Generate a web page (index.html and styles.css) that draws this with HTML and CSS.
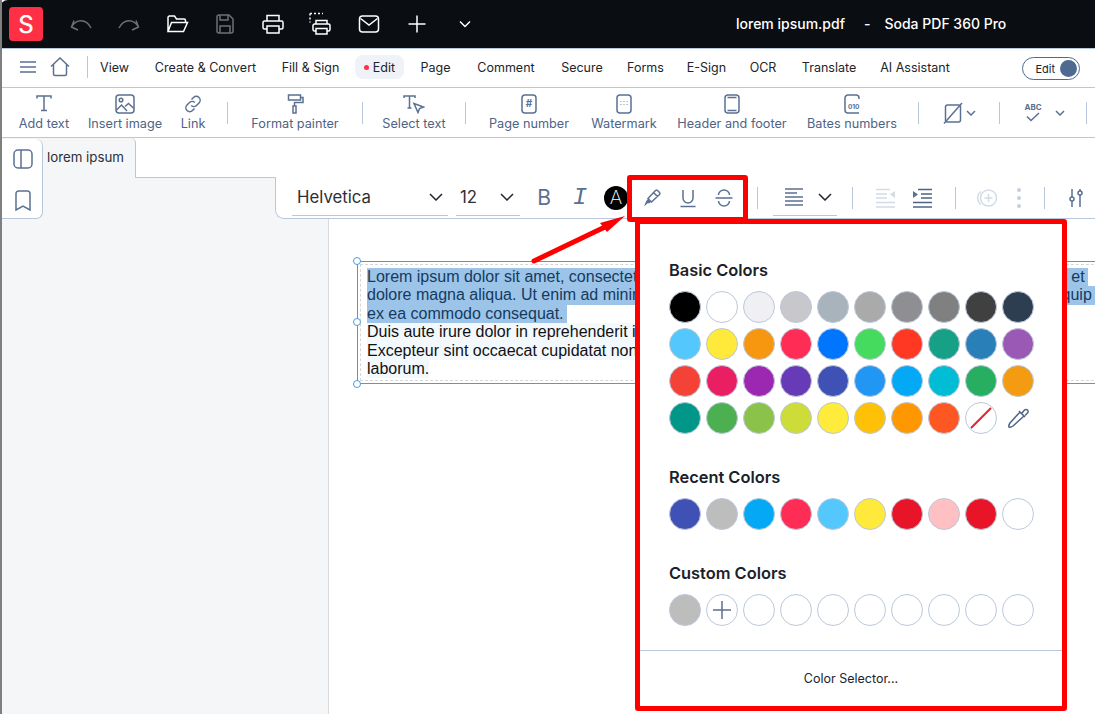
FILE: index.html
```html
<!DOCTYPE html>
<html lang="en">
<head>
  <meta charset="UTF-8">
  <title>lorem ipsum.pdf - Soda PDF 360 Pro</title>
  <link rel="stylesheet" href="styles.css">
</head>
<body>
<div class="app">

  <!-- title bar -->
  <header class="titlebar">
    <div class="logo">S</div>
    <div class="quick">
      <span class="quick__btn quick__btn--off"><svg width="22" height="22" viewBox="0 0 22 22"><path d="M4 7.500L1.500 14l6.500 3M1.500 14C6 6 16 5 21 15"/></svg></span>
      <span class="quick__btn quick__btn--off"><svg width="22" height="22" viewBox="0 0 22 22"><path d="M18 7.500L20.500 14 14 17M20.500 14C16 6 6 5 1 15"/></svg></span>
      <span class="quick__btn"><svg width="24" height="22" viewBox="0 0 24 22"><path d="M3 18V4.500A1.500 1.500 0 0 1 4.500 3h5l2 3H19a1.500 1.500 0 0 1 1.500 1.500V9M3 18.500h15.500L22.500 9.500H6.500L3 18.500z"/></svg></span>
      <span class="quick__btn quick__btn--off"><svg width="22" height="22" viewBox="0 0 22 22"><path d="M3 4a2 2 0 0 1 2-2h10l4 4v12a2 2 0 0 1-2 2H5a2 2 0 0 1-2-2zM6 2v5h8V2M6 20v-7h10v7"/></svg></span>
      <span class="quick__btn"><svg width="22" height="22" viewBox="0 0 22 22"><path d="M5 8V2.500h12V8M5 16H2.500A1.500 1.500 0 0 1 1 14.500V9.500A1.500 1.500 0 0 1 2.500 8h17A1.500 1.500 0 0 1 21 9.500v5a1.500 1.500 0 0 1-1.500 1.500H17M5 13h12v7H5z"/></svg></span>
      <span class="quick__btn"><svg width="24" height="24" viewBox="0 0 24 24"><path d="M7 12V8.500h11V12M7 19H5.500A1.500 1.500 0 0 1 4 17.500v-4A1.500 1.500 0 0 1 5.500 12h14a1.500 1.500 0 0 1 1.500 1.500v4a1.500 1.500 0 0 1-1.500 1.500H18M7 16.500h11v5.500H7z"/><path d="M1 1.500h13M1 1.500v9" stroke-dasharray="2 2"/></svg></span>
      <span class="quick__btn"><svg width="22" height="20" viewBox="0 0 22 20"><rect x="1.500" y="2" width="19" height="16" rx="3"/><path d="M2.500 4.500L11 11l8.500-6.500"/></svg></span>
      <span class="quick__btn"><svg width="20" height="20" viewBox="0 0 20 20"><path d="M10 1.500v17M1.500 10h17"/></svg></span>
      <span class="quick__btn"><svg width="14" height="10" viewBox="0 0 14 10"><path d="M2 2.500l5 5 5-5"/></svg></span>
    </div>
    <div class="titlebar__name">lorem ipsum.pdf<span class="titlebar__dash">-</span>Soda PDF 360 Pro</div>
  </header>

  <!-- menu -->
  <nav class="menu">
    <svg class="menu__burger" width="16" height="12" viewBox="0 0 16 12"><path d="M0 1h16M0 6h16M0 11h16"/></svg>
    <svg class="menu__home" width="20" height="20" viewBox="0 0 20 20"><path d="M1 9.500L10 1l9 8.500M3.500 7.500V17a1.500 1.500 0 0 0 1.500 1.500h10a1.500 1.500 0 0 0 1.500-1.500V7.500"/></svg>
    <span class="menu__sep"></span>
    <div class="menu__items">
      <a>View</a>
      <a>Create &amp; Convert</a>
      <a>Fill &amp; Sign</a>
      <a class="menu__active"><i class="dot"></i>Edit</a>
      <a>Page</a>
      <a>Comment</a>
      <a>Secure</a>
      <a>Forms</a>
      <a>E-Sign</a>
      <a>OCR</a>
      <a>Translate</a>
      <a>AI Assistant</a>
    </div>
    <div class="switch">Edit<i class="switch__knob"></i></div>
  </nav>

  <!-- tools -->
  <section class="toolbar">
    <div class="tool tool--add">
      <svg width="20" height="20" viewBox="0 0 20 20"><path d="M3 4.500V2h14v2.500M10 2v14.500M7 16.500h6"/></svg>
      <span>Add text</span>
    </div>
    <div class="tool tool--image">
      <svg width="20" height="20" viewBox="0 0 20 20"><rect x="1" y="1" width="18" height="18" rx="3"/><circle cx="6" cy="6" r="1.800"/><path d="M1.500 16l5-5 5.500 6M10 12.500l3.500-3 5.500 5"/></svg>
      <span>Insert image</span>
    </div>
    <div class="tool tool--link">
      <svg width="20" height="20" viewBox="0 0 20 20"><path d="M8.500 5.500l2-2a3.800 3.800 0 0 1 5.500 5.500l-2.500 2.500a3.800 3.800 0 0 1-5.300 0M11.500 14.500l-2 2A3.800 3.800 0 0 1 4 11l2.500-2.500a3.800 3.800 0 0 1 5.300 0"/></svg>
      <span>Link</span>
    </div>
    <i class="tool-sep"></i>
    <div class="tool tool--painter">
      <svg width="18" height="20" viewBox="0 0 18 20"><path d="M2.500 1h12v5h-12zM14.500 3.500H17v5H8.500v3M7 12h3v7H7z"/></svg>
      <span>Format painter</span>
    </div>
    <i class="tool-sep"></i>
    <div class="tool tool--select">
      <svg width="22" height="20" viewBox="0 0 22 20"><path d="M1 4V2h11v2M6.500 2v12M4.500 14h4M11 9.500l9.500 3.500-4 1.500-1.500 4z"/></svg>
      <span>Select text</span>
    </div>
    <i class="tool-sep"></i>
    <div class="tool tool--page">
      <svg width="16" height="20" viewBox="0 0 16 20"><rect x="1" y="1" width="14" height="18" rx="3"/><text x="8" y="13" class="svg-txt" text-anchor="middle">#</text></svg>
      <span>Page number</span>
    </div>
    <div class="tool tool--mark">
      <svg width="16" height="20" viewBox="0 0 16 20"><rect x="1" y="1" width="14" height="18" rx="3"/><path class="dots" d="M4.500 7.500h.8M7.600 7.500h.8M10.700 7.500h.8M4.500 10.500h.8M7.600 10.500h.8M10.700 10.500h.8"/></svg>
      <span>Watermark</span>
    </div>
    <div class="tool tool--header">
      <svg width="16" height="20" viewBox="0 0 16 20"><rect x="1" y="1" width="14" height="18" rx="3"/><path d="M3.500 3.500h9M3.500 16.500h9"/></svg>
      <span>Header and footer</span>
    </div>
    <div class="tool tool--bates">
      <svg width="16" height="20" viewBox="0 0 16 20"><path d="M15 5V4a3 3 0 0 0-3-3H4a3 3 0 0 0-3 3v12a3 3 0 0 0 3 3h11"/><text x="15.500" y="15" class="svg-txt svg-txt--small" text-anchor="end">010</text></svg>
      <span>Bates numbers</span>
    </div>
    <i class="tool-sep tool-sep--near"></i>
    <div class="tool-drop tool-drop--shape">
      <svg width="20" height="22" viewBox="0 0 20 22"><rect x="2.500" y="3" width="15" height="17" rx="2"/><path d="M1 21.500L19 1"/></svg>
      <svg class="chev" width="10" height="6" viewBox="0 0 10 6"><path d="M1 1l4 4 4-4"/></svg>
    </div>
    <i class="tool-sep"></i>
    <div class="tool-drop tool-drop--abc">
      <svg width="22" height="22" viewBox="0 0 22 22"><text x="11" y="8" class="svg-txt svg-txt--abc" text-anchor="middle">ABC</text><path d="M5 14.500l4 4 8-7.500"/></svg>
      <svg class="chev chev--abc" width="10" height="6" viewBox="0 0 10 6"><path d="M1 1l4 4 4-4"/></svg>
    </div>
    <i class="tool-sep"></i>
  </section>

  <!-- tabs -->
  <div class="tabs">
    <div class="tab">lorem ipsum</div>
  </div>

  <div class="work">
    <aside class="side"></aside>
    <main class="doc">
      <div class="textbox">
        <i class="handle handle--top"></i>
        <i class="handle handle--mid"></i>
        <i class="handle handle--bot"></i>
        <div class="textbox__inner">
          <span class="line line--sel">Lorem ipsum dolor sit amet, consectetur adipiscing elit, sed do eiusmod tempor incididunt ut labore et</span>
          <span class="line line--sel">dolore magna aliqua. Ut enim ad minim veniam, quis nostrud exercitation ullamco laboris nisi ut aliquip</span>
          <span class="line line--sel">ex ea commodo consequat.</span>
          <span class="line">Duis aute irure dolor in reprehenderit in voluptate velit esse cillum dolore eu fugiat nulla pariatur.</span>
          <span class="line">Excepteur sint occaecat cupidatat non proident, sunt in culpa qui officia deserunt mollit anim id est</span>
          <span class="line">laborum.</span>
        </div>
      </div>
    </main>
  </div>

  <!-- left rail, floats over tab row -->
  <div class="rail">
    <svg width="20" height="20" viewBox="0 0 20 20"><rect x="1" y="1" width="18" height="18" rx="4"/><path d="M8 1v18"/></svg>
    <svg width="16" height="21" viewBox="0 0 16 21"><path d="M1 3.500A2.500 2.500 0 0 1 3.500 1h9A2.500 2.500 0 0 1 15 3.500V20l-7-4-7 4z"/></svg>
  </div>

  <!-- text format bar -->
  <div class="fmt">
    <div class="fmt__select fmt__select--font">Helvetica<svg width="14" height="8" viewBox="0 0 14 8"><path d="M1 1l6 6 6-6"/></svg></div>
    <div class="fmt__select fmt__select--size">12<svg width="14" height="8" viewBox="0 0 14 8"><path d="M1 1l6 6 6-6"/></svg></div>
    <span class="fmt__btn fmt__letter fmt__btn--first">B</span>
    <span class="fmt__btn fmt__letter fmt__letter--i">I</span>
    <span class="fmt__btn"><b class="fmt__color">A</b></span>
    <span class="fmt__btn"><svg width="20" height="20" viewBox="0 0 20 20"><path d="M6 10.500L13.500 2.500a1.500 1.500 0 0 1 2 0l2 2a1.500 1.500 0 0 1 0 2L9.500 14zM11.500 4.500l4 4"/><path class="solid" d="M6 11l3 3-2 1.500-1-.5-4 3.500L4 13.500 5 12z"/></svg></span>
    <span class="fmt__btn"><svg width="18" height="20" viewBox="0 0 18 20"><path d="M4 2v8a5 5 0 0 0 10 0V2M1.500 18.500h15"/></svg></span>
    <span class="fmt__btn"><svg width="18" height="20" viewBox="0 0 18 20"><path d="M3.500 7a5.500 5 0 0 1 11 0M3.500 13a5.500 5 0 0 0 11 0M.5 10h17"/></svg></span>
    <i class="fmt__sep"></i>
    <div class="fmt__select fmt__select--align">
      <svg class="align-ic" width="18" height="18" viewBox="0 0 18 18"><path d="M0 1h18M0 5h12M0 9h18M0 13h18M0 17h18"/></svg>
      <svg width="14" height="8" viewBox="0 0 14 8"><path d="M1 1l6 6 6-6"/></svg>
    </div>
    <i class="fmt__sep"></i>
    <span class="fmt__btn fmt__btn--dim"><svg width="20" height="20" viewBox="0 0 20 20"><path d="M0 1.500h14M0 6h11M0 10h11M0 14.500h19M0 19h19"/><path class="solid" d="M19 3v7l-5-3.500z"/></svg></span>
    <span class="fmt__btn fmt__btn--indent"><svg width="20" height="20" viewBox="0 0 20 20"><path d="M6 1.500h14M9 6h11M9 10h11M1 14.500h19M1 19h19"/><path class="solid" d="M1 3v7l5-3.500z"/></svg></span>
    <i class="fmt__sep"></i>
    <span class="fmt__btn fmt__btn--dim fmt__btn--plus"><svg width="22" height="18" viewBox="0 0 22 18"><circle cx="12.500" cy="9" r="8"/><path d="M8.500 9h8M12.500 5v8M5 2.500a8 8 0 0 0 0 13"/></svg></span>
    <span class="fmt__btn fmt__btn--dim fmt__btn--dots"><i></i><i></i><i></i></span>
    <i class="fmt__sep"></i>
    <span class="fmt__btn fmt__btn--sliders"><svg width="14" height="18" viewBox="0 0 14 18"><path d="M3 0v8M3 12v6M11 0v2M11 6v12"/><circle cx="3" cy="10" r="2"/><circle cx="11" cy="4" r="2"/></svg></span>
  </div>

  <!-- colour popup -->
  <div class="picker">
    <div class="picker__body">
      <h4>Basic Colors</h4>
      <div class="swatches">
        <i class="sw c-000"></i><i class="sw c-fff"></i><i class="sw c-eef"></i><i class="sw c-c8c"></i><i class="sw c-a9b"></i><i class="sw c-aaa"></i><i class="sw c-8e8"></i><i class="sw c-808"></i><i class="sw c-404"></i><i class="sw c-2c3"></i>
        <i class="sw c-54c"></i><i class="sw c-ffe"></i><i class="sw c-f79"></i><i class="sw c-f25"></i><i class="sw c-07f"></i><i class="sw c-4d6"></i><i class="sw c-f38"></i><i class="sw c-16a"></i><i class="sw c-298"></i><i class="sw c-9b5"></i>
        <i class="sw c-f44"></i><i class="sw c-e91"></i><i class="sw c-9c2"></i><i class="sw c-673"></i><i class="sw c-3f5"></i><i class="sw c-219"></i><i class="sw c-03a"></i><i class="sw c-00b"></i><i class="sw c-27a"></i><i class="sw c-f39"></i>
        <i class="sw c-009"></i><i class="sw c-4ca"></i><i class="sw c-8bc"></i><i class="sw c-cdd"></i><i class="sw c-feb"></i><i class="sw c-fc0"></i><i class="sw c-f90"></i><i class="sw c-f57"></i>
        <i class="sw sw--none"><svg width="30" height="30" viewBox="0 0 30 30"><path d="M5 25L25 5"/></svg></i>
        <i class="sw--drop"><svg width="22" height="22" viewBox="0 0 22 22"><path d="M13 5L3 16c-1 1.500-1.500 3-1 4 1 .5 2.500 0 4-1L17 9M12 4l6 6M15 6l2.500-3a2 2 0 0 1 3 3L18 8.500"/></svg></i>
      </div>
      <h4>Recent Colors</h4>
      <div class="swatches">
        <i class="sw c-3f5"></i><i class="sw c-bbb"></i><i class="sw c-03a"></i><i class="sw c-f25"></i><i class="sw c-54c"></i><i class="sw c-ffe"></i><i class="sw c-e81"></i><i class="sw c-fbc"></i><i class="sw c-e81"></i><i class="sw c-fff"></i>
      </div>
      <h4>Custom Colors</h4>
      <div class="swatches">
        <i class="sw c-bbb"></i>
        <i class="sw c-fff sw--add"><svg width="18" height="18" viewBox="0 0 18 18"><path d="M9 0v18M0 9h18"/></svg></i>
        <i class="sw c-fff"></i><i class="sw c-fff"></i><i class="sw c-fff"></i><i class="sw c-fff"></i><i class="sw c-fff"></i><i class="sw c-fff"></i><i class="sw c-fff"></i><i class="sw c-fff"></i>
      </div>
    </div>
    <div class="picker__foot">Color Selector...</div>
  </div>

  <!-- red callouts -->
  <div class="callout"></div>
  <svg class="arrow" width="100" height="54" viewBox="0 0 100 54">
    <path class="arrow__line" d="M3 48L76 13"/>
    <path class="arrow__head" d="M94 3L69 10 76 19z"/>
  </svg>
</div>
</body>
</html>
```

FILE: styles.css
```css
* {
  box-sizing: border-box;
  font-family: Inter, "Noto Sans", sans-serif;
}
html, body {
  margin: 0;
  height: 100%;
  overflow: hidden;
  background: #fff;
}
svg {
  fill: none;
  stroke: #5b7092;
  stroke-width: 1.5;
  display: block;
  flex: none;
}
svg .solid {
  fill: #5b7092;
  stroke: none;
}
.app {
  position: relative;
  width: 1095px;
  height: 714px;
  overflow: hidden;
  border-left: 2px solid #7f7f7f;
  display: flex;
  flex-direction: column;
}

/* title bar */
.titlebar {
  height: 49px;
  margin-left: -2px;
  flex: none;
  background: #0a0d12;
  border-top-left-radius: 8px;
  display: flex;
  align-items: center;
  padding-left: 9px;
  border-bottom: 1px solid #b9c7dc;
}
.logo {
  width: 34px;
  height: 34px;
  border-radius: 4px;
  background: #ff3045;
  color: #fff;
  font-size: 24px;
  font-weight: 500;
  display: flex;
  align-items: center;
  justify-content: center;
}
.quick {
  display: flex;
  margin-left: 14px;
}
.quick__btn {
  width: 48px;
  height: 34px;
  display: flex;
  align-items: center;
  justify-content: center;
}
.quick__btn svg {
  stroke: #fff;
}
.quick__btn--off svg {
  stroke: #6d7074;
}
.titlebar__name {
  position: absolute;
  left: 734px;
  top: 15px;
  color: #fff;
  font-size: 14px;
  font-weight: 500;
  line-height: 18px;
  white-space: nowrap;
}
.titlebar__dash {
  margin: 0 14px 0 19px;
}

/* menu */
.menu {
  height: 39px;
  flex: none;
  display: flex;
  align-items: center;
  border-bottom: 1px solid #b9c7dc;
  padding: 0 0 2px 18px;
}
.menu__home {
  margin-left: 14px;
}
.menu__sep {
  width: 1px;
  height: 22px;
  background: #b9c7dc;
  margin-left: 17px;
}
.menu__items {
  display: grid;
  grid-template-columns: 29px 105px 57px 33px 31px 62px 42px 37px 37px 28px 56px 68px;
  column-gap: 24px;
  justify-items: center;
  align-items: center;
  margin-left: 12px;
  font-size: 12.500px;
  color: #20252d;
  white-space: nowrap;
}
.menu__active {
  background: #eff2f7;
  border-radius: 8px;
  width: 49px;
  height: 24px;
  display: flex;
  align-items: center;
  justify-content: center;
  gap: 4px;
}
.dot {
  width: 5px;
  height: 5px;
  border-radius: 50%;
  background: #ff3045;
}
.switch {
  position: absolute;
  left: 1020px;
  top: 57px;
  width: 58px;
  height: 23px;
  border: 1px solid #4e6a90;
  border-radius: 12px;
  font-size: 11px;
  color: #20252d;
  display: flex;
  align-items: center;
  justify-content: flex-end;
  gap: 5px;
  padding-right: 2px;
}
.switch__knob {
  width: 17px;
  height: 17px;
  border-radius: 50%;
  background: #4e6a90;
}

/* tools */
.toolbar {
  height: 50px;
  flex: none;
  display: flex;
  align-items: center;
  padding-left: 8px;
  border-bottom: 1px solid #b9c7dc;
}
.tool {
  flex: none;
  display: flex;
  flex-direction: column;
  align-items: center;
  gap: 2px;
  font-size: 12.700px;
  color: #4e6485;
  white-space: nowrap;
}
.tool span {
  line-height: 16px;
}
.tool--add { width: 68px; }
.tool--image { width: 94px; }
.tool--link { width: 42px; }
.tool--painter { width: 108px; }
.tool--select { width: 76px; }
.tool--page { width: 100px; }
.tool--mark { width: 90px; }
.tool--header { width: 126px; }
.tool--bates { width: 114px; }
.tool-sep {
  flex: none;
  width: 1px;
  height: 22px;
  margin: 0 13px;
  background: #b9c7dc;
}
.tool-sep--near {
  margin-left: 9px;
}
.tool-drop {
  flex: none;
  display: flex;
  align-items: center;
  justify-content: center;
  gap: 3px;
}
.tool-drop--shape { width: 54px; }
.tool-drop--abc { width: 60px; gap: 5px; }
.chev--abc {
  margin-left: 6px;
}
.svg-txt {
  fill: #5b7092;
  stroke: none;
  font-size: 10px;
  font-weight: 700;
}
.svg-txt--small {
  font-size: 6.500px;
}
.svg-txt--abc {
  font-size: 8px;
}
.dots {
  stroke-width: 1.200px;
}

/* tabs */
.tabs {
  height: 40px;
  flex: none;
  display: flex;
  border-bottom: 1px solid #b9c7dc;
}
.tab {
  width: 134px;
  height: 40px;
  background: #f5f6f8;
  border-right: 1px solid #b9c7dc;
  border-radius: 0 5px 0 0;
  font-size: 13.300px;
  color: #2b3036;
  padding: 10px 0 0 45px;
  line-height: 18px;
}

/* work area */
.work {
  flex: 1;
  display: flex;
  min-height: 0;
}
.side {
  width: 326px;
  flex: none;
  background: #f5f6f8;
}
.doc {
  flex: 1;
  min-width: 0;
  background: #fff;
  border-left: 1px solid #d9d9d9;
  padding: 83px 0 0 28px;
}
.textbox {
  position: relative;
  width: 900px;
  height: 123px;
  border: 1px solid #4a9ce0;
  padding: 2px;
}
.textbox__inner {
  height: 100%;
  border: 1px dashed #d6d6d6;
  padding: 3px 6px;
}
.line {
  display: block;
  width: fit-content;
  white-space: nowrap;
  font-family: "Liberation Sans", Arial, sans-serif;
  font-size: 16px;
  line-height: 18.400px;
  color: #111;
  background: #f3f8fd;
}
.line--sel {
  background: #9cc4e8;
  color: #153a60;
  padding-right: 3px;
}
.handle {
  position: absolute;
  left: -5px;
  width: 8px;
  height: 8px;
  border: 1px solid #4a9ce0;
  border-radius: 50%;
  background: #fff;
}
.handle--top { top: -5px; }
.handle--mid { top: 56px; }
.handle--bot { bottom: -5px; }

/* floating rail */
.rail {
  position: absolute;
  left: 0;
  top: 139px;
  width: 41px;
  height: 80px;
  background: #fff;
  border: 1px solid #b9c7dc;
  border-width: 0 1px 1px 0;
  border-radius: 0 7px 7px 0;
  display: flex;
  flex-direction: column;
  align-items: center;
  gap: 21px;
  padding: 10px 0 0 1px;
}

/* format bar */
.fmt {
  position: absolute;
  left: 273px;
  top: 177px;
  width: 822px;
  height: 42px;
  background: #fff;
  border: 1px solid #b9c7dc;
  border-width: 0 0 1px 1px;
  border-radius: 0 0 0 9px;
  display: flex;
  align-items: center;
  padding-left: 16px;
}
.fmt__select {
  height: 37px;
  display: flex;
  align-items: center;
  justify-content: space-between;
  border-bottom: 1px solid #b9c7dc;
  font-size: 16.800px;
  color: #2b3036;
  padding: 0 5px;
  margin-right: 8px;
}
.fmt__select svg {
  stroke: #20252d;
}
.fmt__select--font { width: 156px; }
.fmt__select--size { width: 64px; padding-right: 6px; padding-left: 4px; }
.fmt__select--align { width: 64px; margin-right: 0; padding: 0 5px 0 12px; }
.fmt__select .align-ic {
  stroke: #5b7092;
  width: 18px;
}
.fmt__btn {
  width: 36px;
  height: 36px;
  flex: none;
  display: flex;
  align-items: center;
  justify-content: center;
}
.fmt__btn--first {
  margin-left: -2px;
}
.fmt__letter {
  font-size: 21px;
  color: #5b7092;
}
.fmt__letter--i {
  font-family: "Liberation Mono", monospace;
  font-style: italic;
  font-size: 24px;
}
.fmt__color {
  width: 24px;
  height: 24px;
  border-radius: 50%;
  background: #000;
  color: #fff;
  font-size: 19px;
  font-weight: 200;
  display: flex;
  align-items: center;
  justify-content: center;
}
.fmt__sep {
  width: 1px;
  height: 22px;
  margin: 0 15px;
  background: #b9c7dc;
  flex: none;
}
.fmt__btn--dim svg {
  stroke: #d3dbe6;
}
.fmt__btn--dim svg .solid {
  fill: #d3dbe6;
  stroke: none;
}
.fmt__btn--indent svg {
  stroke: #4e6485;
}
.fmt__btn--plus {
  width: 32px;
}
.fmt__btn--dots {
  width: 20px;
  margin-left: 6px;
  flex-direction: column;
  gap: 4px;
}
.fmt__btn--dots i {
  width: 4px;
  height: 4px;
  border-radius: 50%;
  background: #c4cedc;
}
.fmt__btn--sliders {
  width: 32px;
}

/* colour picker */
.picker {
  position: absolute;
  left: 633px;
  top: 219px;
  width: 432px;
  height: 492px;
  background: #fff;
  border: 5px solid #f00;
  border-radius: 3px;
  display: flex;
  flex-direction: column;
}
.picker__body {
  padding: 36px 28px 0 29px;
}
.picker h4 {
  margin: 33px 0 11px;
  font-size: 16.400px;
  font-weight: 600;
  line-height: 20px;
  color: #1c2128;
}
.picker h4:first-child {
  margin-top: 0;
}
.swatches {
  display: grid;
  grid-template-columns: repeat(10, 32px);
  grid-auto-rows: 32px;
  gap: 5px;
}
.sw {
  display: flex;
  align-items: center;
  justify-content: center;
  border-radius: 50%;
  border: 1px solid #bcc8db;
}
.sw--none svg {
  stroke: #e8202a;
  stroke-width: 2;
}
.sw--drop {
  display: flex;
  align-items: center;
  justify-content: center;
}
.sw--drop svg {
  stroke: #4e6485;
}
.picker__foot {
  margin-top: 24px;
  flex: 1;
  border-top: 1px solid #b9c7dc;
  font-size: 12.500px;
  color: #20252d;
  display: flex;
  align-items: center;
  justify-content: center;
}
.c-000 { background: #000; }
.c-fff { background: #fff; }
.c-eef { background: #efeff4; }
.c-c8c { background: #c8c7cc; }
.c-a9b { background: #a9b3bc; }
.c-aaa { background: #aaa; }
.c-8e8 { background: #8e8e93; }
.c-808 { background: #808080; }
.c-404 { background: #404040; }
.c-2c3 { background: #2c3e50; }
.c-54c { background: #54c7fc; }
.c-ffe { background: #ffe93b; }
.c-f79 { background: #f7970f; }
.c-f25 { background: #ff2d55; }
.c-07f { background: #0076ff; }
.c-4d6 { background: #44db5e; }
.c-f38 { background: #ff3824; }
.c-16a { background: #16a085; }
.c-298 { background: #2980b9; }
.c-9b5 { background: #9b59b6; }
.c-f44 { background: #f44336; }
.c-e91 { background: #e91e63; }
.c-9c2 { background: #9c27b0; }
.c-673 { background: #673ab7; }
.c-3f5 { background: #3f51b5; }
.c-219 { background: #2196f3; }
.c-03a { background: #03a9f4; }
.c-00b { background: #00bcd4; }
.c-27a { background: #27ae60; }
.c-f39 { background: #f39c12; }
.c-009 { background: #009688; }
.c-4ca { background: #4caf50; }
.c-8bc { background: #8bc34a; }
.c-cdd { background: #cddc39; }
.c-feb { background: #ffeb3b; }
.c-fc0 { background: #ffc107; }
.c-f90 { background: #ff9800; }
.c-f57 { background: #ff5722; }
.c-bbb { background: #bdbdbd; }
.c-e81 { background: #e81528; }
.c-fbc { background: #ffc0c4; }

/* red callouts */
.callout {
  position: absolute;
  left: 625px;
  top: 175px;
  width: 121px;
  height: 47px;
  border: 5px solid #f00;
  border-radius: 3px;
}
.arrow {
  position: absolute;
  left: 529px;
  top: 213px;
}
.arrow__line {
  stroke: #f00;
  stroke-width: 5;
  stroke-linecap: round;
}
.arrow__head {
  fill: #f00;
  stroke: none;
}
```
